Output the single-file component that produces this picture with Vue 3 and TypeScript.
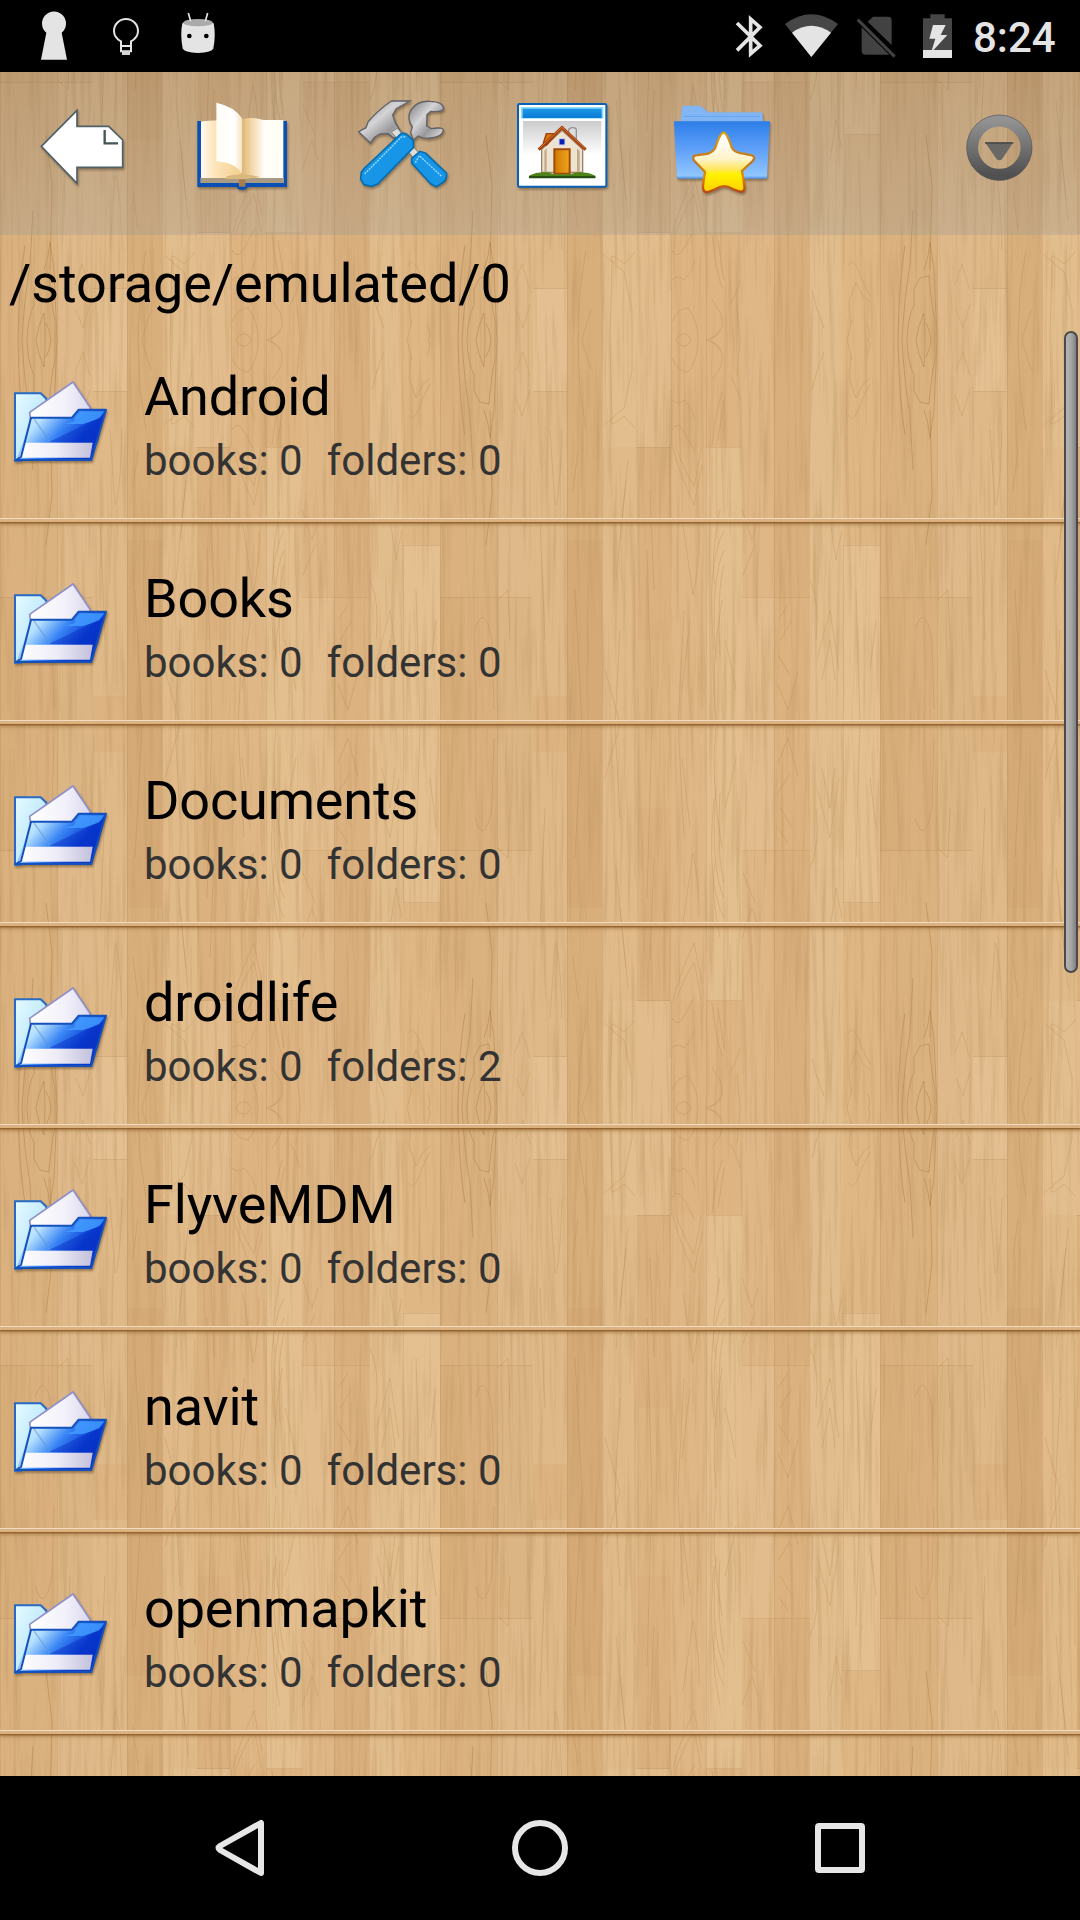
<script setup lang="ts">
interface Folder {
  name: string
  books: number
  folders: number
}

const path = '/storage/emulated/0'
const folders: Folder[] = [
  { name: 'Android', books: 0, folders: 0 },
  { name: 'Books', books: 0, folders: 0 },
  { name: 'Documents', books: 0, folders: 0 },
  { name: 'droidlife', books: 0, folders: 2 },
  { name: 'FlyveMDM', books: 0, folders: 0 },
  { name: 'navit', books: 0, folders: 0 },
  { name: 'openmapkit', books: 0, folders: 0 },
]

// Planks of one wood tile: x, width, then [top, colour] segments down the half tile
interface Plank {
  x: number
  w: number
  parts: [number, string][]
}
const planks: Plank[] = [
  { x: 0, w: 25, parts: [[0, '#dab17f'], [257, '#d7ad7a']] },
  { x: 25, w: 32, parts: [[0, '#dab280'], [257, '#dab07e']] },
  { x: 57, w: 36, parts: [[0, '#dfb989'], [257, '#dcb584']] },
  { x: 93, w: 34, parts: [[0, '#e3bf91'], [51, '#dfb988'], [356, '#dcb381']] },
  { x: 127, w: 35, parts: [[0, '#d8ae7b'], [200, '#d5aa77']] },
  { x: 162, w: 35, parts: [[0, '#e2bd8d'], [107, '#e0ba89']] },
  { x: 197, w: 34, parts: [[0, '#e2bc8c'], [107, '#dab17f'], [300, '#ddb583']] },
  { x: 231, w: 35, parts: [[0, '#ddb482'], [107, '#dfb786']] },
  { x: 266, w: 36, parts: [[0, '#ddb482'], [107, '#e3be8e']] },
  { x: 302, w: 32, parts: [[0, '#dfb686'], [257, '#e2bc8c']] },
  { x: 334, w: 36, parts: [[0, '#d9af7d'], [257, '#dbb280']] },
  { x: 370, w: 33, parts: [[0, '#e1bc8c'], [240, '#e2bd8d']] },
  { x: 403, w: 37, parts: [[0, '#deb785'], [205, '#e4bf90']] },
]
</script>

<template>
  <div class="screen">
    <svg class="wood" width="1080" height="1920" aria-hidden="true">
      <defs>
        <filter id="grain" x="0" y="0" width="100%" height="100%">
          <feTurbulence type="fractalNoise" baseFrequency="0.22 0.008" numOctaves="4" seed="7" />
          <feColorMatrix values="0 0 0 0 .5  0 0 0 0 .3  0 0 0 0 .12  1.15 0 0 0 -.53" />
        </filter>
        <g id="half">
          <template v-for="p in planks" :key="p.x">
            <rect
              v-for="s in p.parts"
              :key="s[0]"
              :x="p.x"
              :y="s[0]"
              :width="p.w + 0.5"
              :height="384.5 - s[0]"
              :fill="s[1]"
            />
          </template>
          <g fill="none" stroke="#a8763f" stroke-opacity=".26" stroke-width="1">
            <path d="M45 0Q45 12 44 27Q38 14 36 0M51 0Q50 10 46 17M27 0Q28 25 34 34L34 51L40 62L49 64Q52 30 55 20L55 0M22 0Q24 40 30 75L33 130M18 0Q19 60 25 95M57 0L54 70L50 98L48 84L44 70M50 70L52 155L46 205" stroke-opacity=".45" />
            <path d="M236 0Q240 9 248 5L251 0M232 18Q238 32 248 32Q258 20 258 0M232 60Q238 66 244 60L252 70L255 80M232 90Q236 82 242 88L255 112M233 107Q238 130 254 165Q257 150 262 125M236 107Q244 130 254 146Q258 130 261 108" />
            <path d="M266 0L276 4Q286 12 280 28L272 40M270 0L280 10M290 35Q298 50 300 60M282 52Q276 70 272 105M284 60L278 100M142 0Q147 20 152 30M138 0L140 50L146 90M300 0L297 35" />
            <path d="M411 15L409 38L416 58L423 44L430 38M408 75Q414 85 422 60L430 44M407 0L412 20M428 0Q432 5 427 15M372 50Q376 30 384 12M170 0L172 80Q168 90 184 76L195 88M164 85L184 68L192 30V0" />
            <path d="M243 185L253 255Q260 220 259 190M280 170Q270 220 275 245M284 190Q266 225 274 310M284 210Q270 240 276 320M284 225Q277 250 280 315M282 260Q270 330 276 380M370 240Q380 260 376 300M58 260L68 250L70 300M35 290Q44 260 52 300L54 370" />
            <path d="M338 280L348 265M340 300L352 280M338 345L348 370L358 332M338 315L350 335M302 170L312 200L318 180M303 235L315 205M244 270L238 384M250 280L242 350M210 150L214 250M207 210L212 384M100 180L105 300M135 250L142 384M138 110L133 150M165 330L180 384M180 290L175 384M296 350L290 320L285 300M416 250L420 384M430 330L436 280" />
            <path d="M377 320L390 270L399 330M382 340L390 300L395 340M110 90L115 165Q120 160 122 90M188 120L180 200M186 140L176 240M230 50V180M195 230V384M390 180L396 220L402 190M75 55L82 76L90 50M76 30L83 12L90 36" stroke-opacity=".22" />
          </g>
          <g fill="none" stroke="#a8763f" stroke-opacity=".2">
            <path d="M.5 0V384M57.5 0V384M127.5 0V384M162.5 0V384M231.5 0V107M266.5 0V384M334.5 0V384M403.5 205V384M93 51.5H127M197 107.5H231M266 107.5H302M0 257.5H93M302 257.5H370M403 205.5H440" />
          </g>
        </g>
        <pattern id="planks" patternUnits="userSpaceOnUse" width="440" height="768" y="340">
          <use href="#half" />
          <use href="#half" transform="translate(0 768) scale(1 -1)" />
        </pattern>
      </defs>
      <rect width="1080" height="1920" fill="url(#planks)" />
      <rect width="1080" height="1920" filter="url(#grain)" />
    </svg>

    <header class="status">
      <svg width="80" height="72" viewBox="0 0 240 216" fill="#e4e4e4">
        <path d="M139 98A36 36 0 1 1 185 98L201 179H123Z" />
      </svg>
      <svg width="80" height="72" viewBox="240 0 240 216" fill="none" stroke="#e4e4e4">
        <path d="M363 154V124Q342 113 342 93A36 36 0 0 1 414 93Q414 113 393 124V154Z" stroke-width="6" />
        <path d="M363 138H393" stroke-width="6" />
        <path d="M366 153H390V165H366Z" fill="#d2d6d0" stroke="none" />
      </svg>
      <svg width="80" height="72" viewBox="480 0 240 216">
        <path d="M547 70Q594 48 641 70Q648 105 640 145Q636 158 594 159Q552 158 548 145Q540 105 547 70Z" fill="#e4e4e4" />
        <ellipse cx="594" cy="68" rx="44" ry="11" fill="#aaa" />
        <path d="M565 39L572 64M623 39L616 64" stroke="#e4e4e4" stroke-width="5" />
        <circle cx="568" cy="108" r="7" /><circle cx="619" cy="108" r="7" />
      </svg>
      <span class="gap"></span>
      <svg width="50" height="72" viewBox="78 0 150 216" fill="none" stroke="#e4e4e4" stroke-width="11">
        <path d="M111 69L180 137L152 161V57L180 82L111 151" />
      </svg>
      <svg width="70" height="72" viewBox="228 0 210 216">
        <path d="M255 72Q334 14 414 72L334 171Z" fill="#464646" />
        <path d="M276 98Q334 57 393 98L334 171Z" fill="#e4e4e4" />
      </svg>
      <svg width="60" height="72" viewBox="438 0 180 216">
        <path d="M503 65L519 50H564Q575 50 575 61V135ZM485 82L568 164H497Q485 164 485 153Z" fill="#424242" />
        <path d="M473 59L584 170" stroke="#424242" stroke-width="9" />
      </svg>
      <svg width="60" height="72" viewBox="618 0 180 216">
        <path d="M669 55H691V43H734V55H756V151H669Z" fill="#464646" />
        <path d="M669 150H756V174H669Z" fill="#e4e4e4" />
        <path d="M699 75H737L722 105H742L693 158L706 116H688Z" fill="#e4e4e4" />
      </svg>
      <span class="clock">8:24</span>
    </header>

    <div class="toolbar">
      <svg class="shade" viewBox="6 216 480 489">
        <path d="M124 439L231 331V379H326L368 420V502H231V550Z" fill="#fff" stroke="#506168" stroke-width="5" />
        <path d="M314 390V430H354" fill="none" stroke="#435557" stroke-width="7" />
      </svg>

      <svg class="shade" viewBox="486 216 480 489">
        <defs>
          <linearGradient id="pageL"><stop offset="0" stop-color="#fffaf0" /><stop offset=".35" stop-color="#fde4b8" /><stop offset="1" stop-color="#f3d08f" /></linearGradient>
          <linearGradient id="pageR"><stop offset="0" stop-color="#deb573" /><stop offset=".25" stop-color="#f3d9ac" /><stop offset=".55" stop-color="#fffefa" /><stop offset="1" stop-color="#fffdf1" /></linearGradient>
          <linearGradient id="leaf"><stop offset="0" stop-color="#fffdf5" /><stop offset=".7" stop-color="#fff" /><stop offset="1" stop-color="#f7e3bf" /></linearGradient>
        </defs>
        <path d="M592 363H861V561H744Q738 570 727 570Q714 570 709 561H592Z" fill="#0a50b4" />
        <path d="M601 534H852V549H601Z" fill="#a99a83" />
        <path d="M603 364Q680 358 725 364V534H603Z" fill="url(#pageL)" />
        <path d="M725 357Q760 350 790 360H850V534H725Z" fill="url(#pageR)" />
        <path d="M680 529Q724 515 780 531L740 537H675Z" fill="#d9b87e" />
        <path d="M649 308Q703 320 726 354V521Q704 487 649 484Z" fill="url(#leaf)" />
        <path d="M717 538H736V560H717Z" fill="#aa7d4d" />
      </svg>

      <svg class="shade" viewBox="-24 6 480 489">
        <defs>
          <linearGradient id="steel" x2="1" y2="1"><stop offset="0" stop-color="#777" /><stop offset=".4" stop-color="#d5d5d8" /><stop offset=".65" stop-color="#98989a" /><stop offset="1" stop-color="#eee" /></linearGradient>
        </defs>
        <path d="M242 188L247 170Q228 145 244 118Q263 92 300 94Q339 95 341 116Q336 127 302 124L291 134L290 168L303 176Q340 170 340 181Q336 201 301 204Q282 208 265 198L250 210Z" fill="url(#steel)" stroke="#626268" stroke-width="4" />
        <path d="M184 93H240L199 116L188 135L196 158L214 187L192 205L175 191L151 192L135 201L121 219L86 185L108 173L114 156Q144 120 184 93Z" fill="url(#steel)" stroke="#626268" stroke-width="4" />
        <path d="M184 186L202 175L256 237L266 248L250 264L236 245Z" fill="#deded8" stroke="#84847e" stroke-width="3" />
        <path d="M245 265L270 244L287 250L349 309Q353 321 342 335L319 350L303 342L245 279Z" fill="#1796e8" stroke="#076cad" stroke-width="5" />
        <path d="M213 191Q224 186 236 198L250 212V233L143 342L125 349L102 344L92 327L94 307L101 297Z" fill="#1796e8" stroke="#076cad" stroke-width="5" />
        <path d="M104 312L214 201L228 200M256 278L268 257L335 319" fill="none" stroke="#9edcff" stroke-width="4" stroke-dasharray="6 3" />
      </svg>

      <svg class="shade" viewBox="456 6 480 489">
        <defs>
          <linearGradient id="sky" x2="0" y2="1"><stop offset="0" stop-color="#ccc" /><stop offset=".55" stop-color="#fff" /></linearGradient>
          <linearGradient id="bar" x2="0" y2="1"><stop offset="0" stop-color="#1d98e8" /><stop offset="1" stop-color="#067bd3" /></linearGradient>
          <linearGradient id="door"><stop offset="0" stop-color="#cf7904" /><stop offset="1" stop-color="#f0a51c" /></linearGradient>
        </defs>
        <rect x="564" y="102" width="265" height="248" rx="4" fill="#fff" stroke="#0861b5" stroke-width="6" />
        <rect x="573" y="111" width="247" height="35" fill="#8edaff" />
        <rect x="578" y="116" width="237" height="28" fill="url(#bar)" />
        <rect x="579" y="153" width="235" height="186" fill="url(#sky)" />
        <path d="M716 203V180Q718 173 728 173Q739 173 739 181V209" fill="#ddd" stroke="#949494" stroke-width="4" />
        <path d="M635 238L696 181L758 238V307H635Z" fill="#eee3d0" stroke="#9c8267" stroke-width="4" />
        <path d="M643 307V242L650 235V307M749 307V242L741 235V307" fill="#c4aa8b" />
        <path d="M649 191H680L649 226L640 219Z" fill="#d6790a" stroke="#9a3e0d" stroke-width="4" />
        <path d="M626 239L696 173L767 239" fill="none" stroke="#a33d0a" stroke-width="9" />
        <path d="M628 235L696 172L765 235" fill="none" stroke="#ee9a4a" stroke-width="2" />
        <rect x="687" y="206" width="18" height="19" fill="#0520b5" stroke="#d8d8f2" stroke-width="3" />
        <path d="M673 311V238H719V311Z" fill="url(#door)" stroke="#9c4b0b" stroke-width="6" />
        <path d="M597 317Q620 305 652 307L674 313H718L742 307Q775 306 796 317V323H597Z" fill="#4d8317" />
        <path d="M597 318H796V325H597Z" fill="#264e12" />
      </svg>

      <svg class="shade" viewBox="936 6 480 489">
        <defs>
          <linearGradient id="folderFront" x2="0" y2="1"><stop offset="0" stop-color="#2d7de8" /><stop offset=".45" stop-color="#5b9ef8" /><stop offset=".95" stop-color="#90c5ff" /><stop offset="1" stop-color="#4990df" /></linearGradient>
          <linearGradient id="star" x2="0" y2="1"><stop offset=".1" stop-color="#fff" /><stop offset=".45" stop-color="#fff3c7" /><stop offset=".62" stop-color="#ffe65a" /><stop offset=".7" stop-color="#fff200" /><stop offset="1" stop-color="#ffd000" /></linearGradient>
          <linearGradient id="starEdge" x2="0" y2="1"><stop offset="0" stop-color="#dda009" /><stop offset=".5" stop-color="#bd7429" /><stop offset=".75" stop-color="#e58b00" /><stop offset="1" stop-color="#b64718" /></linearGradient>
        </defs>
        <path d="M1052 155L1056 112Q1057 107 1064 107H1108Q1115 107 1134 127H1296L1300 155Z" fill="#82b5f4" />
        <path d="M1060 139H1290" stroke="#65a4ef" stroke-width="3" />
        <path d="M1032 154H1320L1311 326H1041Z" fill="url(#folderFront)" />
        <path d="M1181 188Q1190 188 1206 234Q1214 248 1236 250L1266 256Q1278 261 1268 273L1236 303L1243 347Q1246 367 1230 365L1208 357Q1182 340 1157 357L1134 366Q1117 368 1119 347L1125 306L1094 274Q1084 262 1096 256L1127 252Q1146 249 1155 235Q1171 188 1181 188Z" fill="url(#star)" stroke="url(#starEdge)" stroke-width="7" />
      </svg>

      <span class="gap"></span>
      <svg viewBox="657 216 480 489">
        <defs>
          <linearGradient id="ring" x2="0" y2="1"><stop offset="0" stop-color="#929292" /><stop offset="1" stop-color="#505050" /></linearGradient>
        </defs>
        <circle cx="898" cy="443" r="81" fill="none" stroke="url(#ring)" stroke-width="35" />
        <circle cx="898" cy="443" r="98" fill="none" stroke="#555" stroke-opacity=".6" stroke-width="3" />
        <path d="M855 427H940L906 478Q898 484 890 478Z" fill="#696865" />
        <path d="M855 429H940" stroke="#444" stroke-width="4" />
      </svg>
    </div>

    <main class="browser">
      <div class="path">{{ path }}</div>
      <ul class="list">
        <li v-for="(f, i) in folders" :key="f.name" class="row">
          <svg class="icon" viewBox="0 0 390 360">
            <defs>
              <linearGradient :id="`front${i}`" x2="1" y2=".5"><stop offset="0" stop-color="#f2fbff" /><stop offset=".3" stop-color="#b5e0ff" /><stop offset=".55" stop-color="#3a86f5" /><stop offset=".8" stop-color="#0a3fd4" /><stop offset="1" stop-color="#0937c4" /></linearGradient>
              <linearGradient :id="`back${i}`" x2="1" y2="1"><stop offset="0" stop-color="#e6fbff" /><stop offset="1" stop-color="#a4dcfb" /></linearGradient>
              <linearGradient :id="`paper${i}`"><stop offset="0" stop-color="#fff" /><stop offset=".6" stop-color="#f2f1fb" /><stop offset="1" stop-color="#dad8ea" /></linearGradient>
              <linearGradient :id="`base${i}`"><stop offset="0" stop-color="#fff" /><stop offset=".5" stop-color="#eeedf7" /><stop offset="1" stop-color="#c3c0dc" /></linearGradient>
            </defs>
            <path d="M48 302V100H125L142 116V160L100 175L66 302Z" :fill="`url(#back${i})`" stroke="#286bc4" stroke-width="6" />
            <path d="M222 66L273 142V190H96L92 157Z" :fill="`url(#paper${i})`" stroke="#9090c8" stroke-width="5" />
            <path d="M96 173H219L239 149H321L277 302H52Z" :fill="`url(#front${i})`" />
            <path d="M230 170L244 154H316L300 176L252 192H198L226 184Z" fill="#429bff" opacity=".85" />
            <path d="M150 246L315 166L297 248Z" fill="#0528bf" opacity=".42" />
            <path d="M105 177L154 246" stroke="#6198cf" stroke-width="4" opacity=".55" />
            <path d="M75 248H281L273 293H61Z" :fill="`url(#base${i})`" />
            <path d="M96 173H219L239 149H321L277 300H50L66 291Z" fill="none" stroke="#1551bd" stroke-width="6" stroke-linejoin="round" />
          </svg>
          <div class="text">
            <div class="name">{{ f.name }}</div>
            <div class="info">
              <span>books: {{ f.books }}</span>
              <span>folders: {{ f.folders }}</span>
            </div>
          </div>
        </li>
      </ul>
    </main>
    <div class="scrollbar"></div>

    <nav class="nav">
      <svg viewBox="0 0 300 144"><path d="M171 47V97L130 74Q127 72 130 70Z" /></svg>
      <svg viewBox="0 0 300 144"><circle cx="150" cy="72" r="25" /></svg>
      <svg viewBox="0 0 300 144"><rect x="128" y="50" width="44" height="44" rx="1" /></svg>
    </nav>
  </div>
</template>

<style>
body {
  background: #000;
}
</style>

<style scoped>
.screen {
  position: relative;
  display: flex;
  flex-direction: column;
  width: 1080px;
  height: 1920px;
  overflow: hidden;
  font-family: Roboto, 'Noto Sans', sans-serif;
  color: #000;
}
.wood {
  position: absolute;
  inset: 0;
  z-index: -1;
}
.screen > * {
  flex-shrink: 0;
}
svg {
  display: block;
}
.gap {
  flex: 1;
}
.status {
  display: flex;
  height: 72px;
  background: #000;
}
.clock {
  width: 107px;
  margin-left: 7px;
  font-size: 42px;
  font-weight: 500;
  line-height: 76px;
  color: #e4e4e4;
}
.toolbar {
  display: flex;
  height: 163px;
  padding: 0 1px 0 2px;
  background: linear-gradient(rgba(85, 80, 75, 0.2), rgba(150, 150, 150, 0.28));
}
.toolbar svg {
  width: 160px;
  height: 163px;
}
.shade {
  filter: drop-shadow(1px 2px 1px rgba(60, 40, 20, 0.4));
}
.browser {
  height: 1541px;
  overflow: hidden;
}
.path {
  height: 85px;
  padding-left: 9px;
  font-size: 54px;
  line-height: 97px;
  letter-spacing: -0.1px;
  white-space: nowrap;
}
.list {
  margin: 0;
  padding: 0;
  list-style: none;
}
.row {
  display: flex;
  box-sizing: border-box;
  height: 202px;
  border-bottom: 3px solid #dbb27f;
  box-shadow:
    inset 0 -1px #f0dcc0,
    0 1px 0 rgba(137, 89, 35, 0.65),
    0 2px 0 rgba(137, 89, 35, 0.3),
    0 3px 3px rgba(137, 89, 35, 0.45);
}
.icon {
  width: 130px;
  height: 120px;
  margin: 40px 0 0 -1px;
  filter: drop-shadow(1px 2px 1px rgba(80, 50, 20, 0.45));
}
.text {
  padding: 45px 0 0 15px;
  white-space: nowrap;
}
.name {
  font-size: 54px;
  line-height: 64px;
  letter-spacing: -0.15px;
}
.info {
  display: flex;
  gap: 24px;
  font-size: 42px;
  line-height: 64px;
  color: #333;
}
.scrollbar {
  position: absolute;
  top: 331px;
  left: 1064px;
  box-sizing: border-box;
  width: 14px;
  height: 642px;
  border: 2px solid #4b4a48;
  border-radius: 7px;
  background: linear-gradient(90deg, #b5b5b5, #a6a6a6 50%, #808080);
}
.nav {
  display: flex;
  height: 144px;
  padding: 0 90px;
  background: #000;
}
.nav svg {
  width: 300px;
  height: 144px;
  fill: none;
  stroke: #e6e6e6;
  stroke-width: 6;
  stroke-linejoin: round;
}
</style>
